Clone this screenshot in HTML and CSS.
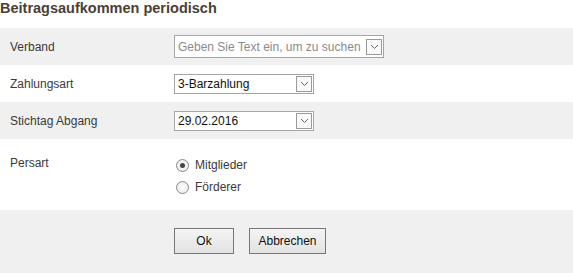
FILE: index.html
```html
<!DOCTYPE html>
<html lang="de">
<head>
  <meta charset="UTF-8">
  <title>Beitragsaufkommen periodisch</title>
  <link rel="stylesheet" href="styles.css">
</head>
<body>
  <h2 class="title">Beitragsaufkommen periodisch</h2>
  <form class="form">
    <div class="row shaded">
      <label class="label">Verband</label>
      <div class="combo wide">
        <span class="placeholder">Geben Sie Text ein, um zu suchen</span>
        <span class="arrow">
          <svg width="9" height="6" viewBox="0 0 9 6"><path d="M1 1 L4.5 4.5 L8 1" fill="none" stroke="#666" stroke-width="1"/></svg>
        </span>
      </div>
    </div>
    <div class="row">
      <label class="label">Zahlungsart</label>
      <div class="combo">
        <span class="value">3-Barzahlung</span>
        <span class="arrow">
          <svg width="9" height="6" viewBox="0 0 9 6"><path d="M1 1 L4.5 4.5 L8 1" fill="none" stroke="#666" stroke-width="1"/></svg>
        </span>
      </div>
    </div>
    <div class="row shaded">
      <label class="label">Stichtag Abgang</label>
      <div class="combo">
        <span class="value">29.02.2016</span>
        <span class="arrow">
          <svg width="9" height="6" viewBox="0 0 9 6"><path d="M1 1 L4.5 4.5 L8 1" fill="none" stroke="#666" stroke-width="1"/></svg>
        </span>
      </div>
    </div>
    <div class="row tall">
      <label class="label">Persart</label>
      <div class="radios">
        <div class="radio"><span class="dot checked"></span>Mitglieder</div>
        <div class="radio"><span class="dot"></span>Förderer</div>
      </div>
    </div>
    <div class="footer">
      <button type="button" class="btn ok">Ok</button>
      <button type="button" class="btn">Abbrechen</button>
    </div>
  </form>
</body>
</html>
```
FILE: styles.css
```css
body {
  margin: 0;
  font-family: "Liberation Sans", Arial, sans-serif;
  font-size: 12px;
  color: #333;
  background: #fff;
}
.title {
  margin: 0;
  height: 28px;
  font-size: 14.5px;
  font-weight: bold;
  color: #4a4036;
  line-height: 16px;
}
.row {
  display: flex;
  align-items: center;
  height: 37px;
  padding-left: 10px;
}
.shaded {
  background: #f0f0f0;
}
.label {
  width: 164px;
  color: #3a3a3a;
}
.combo {
  display: flex;
  align-items: center;
  justify-content: space-between;
  box-sizing: border-box;
  width: 140px;
  height: 20px;
  border: 1px solid #a5a5a5;
  background: #fff;
  padding: 0 1px 0 3px;
  color: #111;
}
.combo.wide {
  width: 210px;
  height: 23px;
}
.placeholder {
  color: #8a8a8a;
  white-space: nowrap;
}
.arrow {
  display: flex;
  align-items: center;
  justify-content: center;
  box-sizing: border-box;
  width: 16px;
  height: 16px;
  border: 1px solid #9a9a9a;
  background: #fafafa;
}
.tall {
  height: 71px;
  align-items: flex-start;
}
.tall .label {
  padding-top: 17px;
}
.radios {
  padding-top: 18px;
  display: flex;
  flex-direction: column;
  gap: 6px;
}
.radio {
  display: flex;
  align-items: center;
  height: 16px;
  color: #3a3a3a;
}
.dot {
  box-sizing: border-box;
  width: 13px;
  height: 13px;
  border: 1px solid #8a8a8a;
  border-radius: 50%;
  background: radial-gradient(circle, #fff 0, #e6e6e6 100%);
  margin: 0 6px 0 2px;
  position: relative;
}
.dot.checked::after {
  content: "";
  position: absolute;
  left: 3px;
  top: 3px;
  width: 5px;
  height: 5px;
  border-radius: 50%;
  background: #444;
}
.footer {
  background: #f0f0f0;
  height: 63px;
  padding: 18px 0 0 174px;
  box-sizing: border-box;
  display: flex;
  align-items: flex-start;
  gap: 15px;
}
.btn {
  height: 26px;
  border: 1px solid #777;
  background: linear-gradient(#f4f4f4, #e2e2e2);
  font-family: inherit;
  font-size: 12px;
  color: #111;
  padding: 0;
}
.btn.ok {
  width: 60px;
}
.btn:not(.ok) {
  width: 77px;
}
```
